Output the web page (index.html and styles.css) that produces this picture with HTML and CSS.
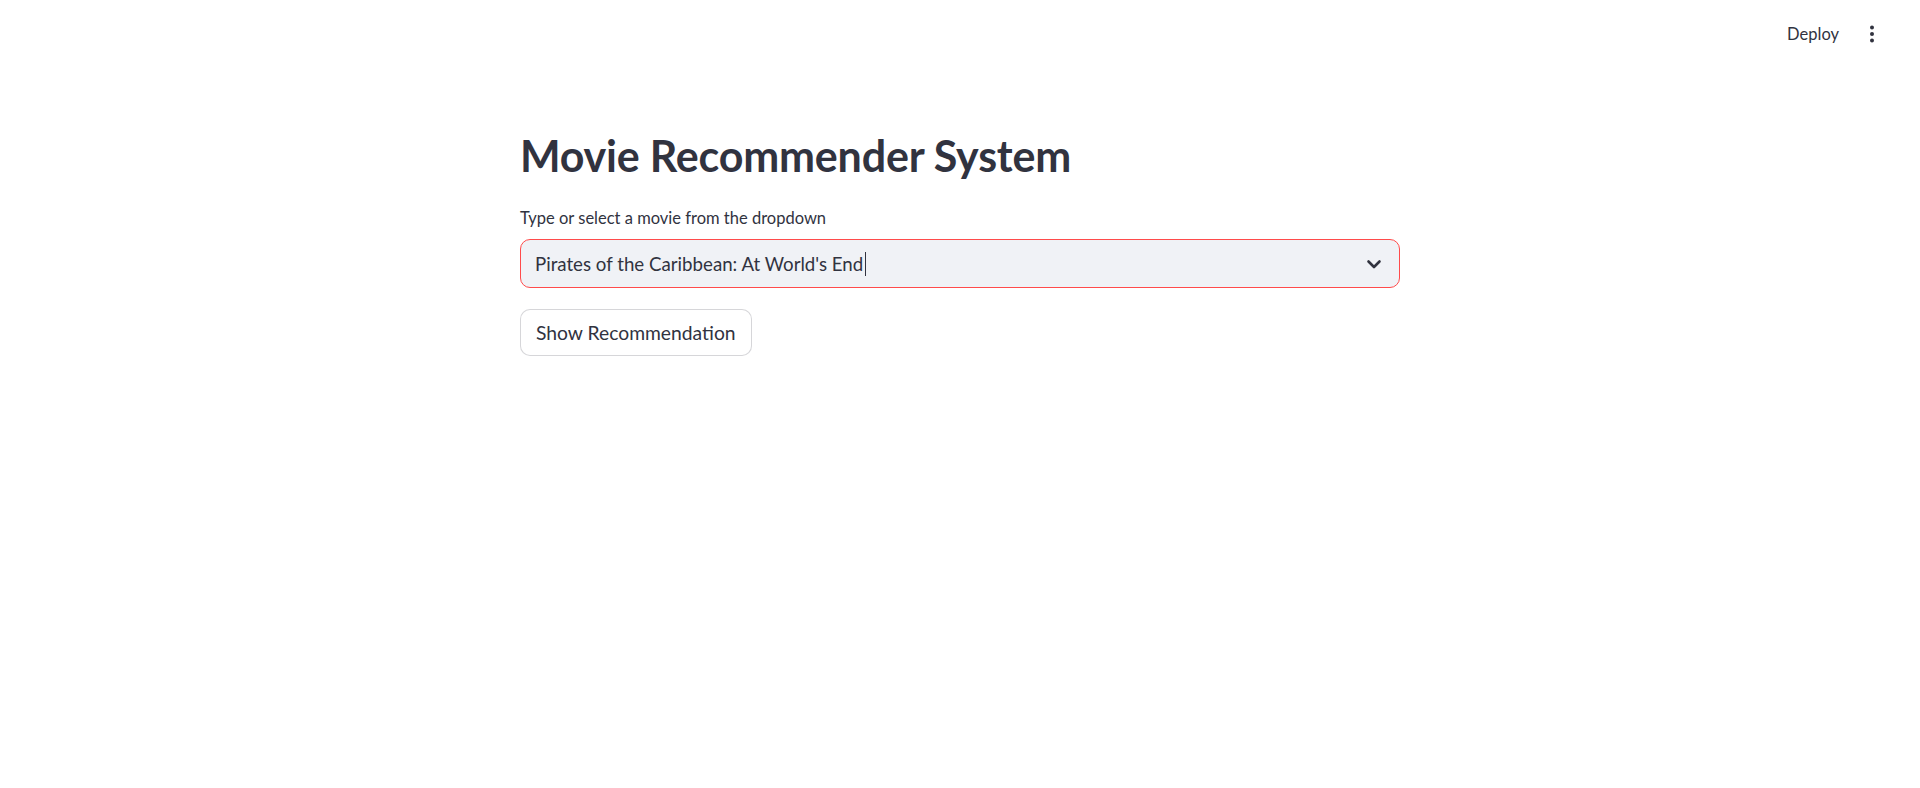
FILE: index.html
```html
<!DOCTYPE html>
<html>
<head>
<meta charset="utf-8">
<link rel="stylesheet" href="styles.css">
</head>
<body>
<header class="topbar">
  <button class="deploy">Deploy</button>
  <button class="menu" aria-label="menu">
    <svg width="20" height="20" viewBox="0 0 20 20"><circle cx="10" cy="3.5" r="2" fill="#31333f"/><circle cx="10" cy="10" r="2" fill="#31333f"/><circle cx="10" cy="16.5" r="2" fill="#31333f"/></svg>
  </button>
</header>
<main class="main">
  <h1 class="title">Movie Recommender System</h1>
  <label class="label">Type or select a movie from the dropdown</label>
  <div class="select">
    <span class="value">Pirates of the Caribbean: At World's End<span class="caret"></span></span>
    <svg class="chev" width="24" height="24" viewBox="0 0 24 24"><path d="M6.5 9.5 L12 15 L17.5 9.5" fill="none" stroke="#31333f" stroke-width="2.6" stroke-linecap="round" stroke-linejoin="round"/></svg>
  </div>
  <button class="btn">Show Recommendation</button>
</main>
</body>
</html>
```
FILE: styles.css
```css
* { box-sizing: border-box; }
html, body { margin: 0; padding: 0; background: #ffffff; }
body {
  font-family: Lato, "Noto Sans", sans-serif;
  color: #31333f;
  height: 788px;
  overflow: hidden;
}
.topbar {
  height: 68px;
  display: flex;
  justify-content: flex-end;
  align-items: center;
  padding-right: 34px;
  gap: 19px;
}
.deploy {
  font-family: inherit;
  font-size: 16.5px;
  color: #31333f;
  background: none;
  border: none;
  padding: 0;
}
.menu {
  background: none;
  border: none;
  padding: 0;
  width: 28px;
  height: 28px;
  display: flex;
  align-items: center;
  justify-content: center;
}
.main {
  width: 880px;
  margin: 0 auto;
  padding-top: 55px;
  display: flex;
  flex-direction: column;
  align-items: flex-start;
}
.title {
  margin: 0;
  font-size: 43px;
  font-weight: 700;
  line-height: 66px;
  letter-spacing: -0.2px;
}
.label {
  margin-top: 15px;
  font-size: 16.5px;
  line-height: 28px;
}
.select {
  margin-top: 7px;
  width: 880px;
  height: 49px;
  background: #f0f2f6;
  border: 1px solid #ff4b4b;
  border-radius: 10px;
  display: flex;
  align-items: center;
  justify-content: space-between;
  padding: 0 13px 0 14px;
}
.value {
  font-size: 18.7px;
  display: flex;
  align-items: center;
}
.caret {
  display: inline-block;
  width: 1px;
  height: 24px;
  background: #31333f;
  margin-left: 2px;
}
.btn {
  margin-top: 21px;
  height: 47px;
  padding: 0 15px;
  background: #ffffff;
  border: 1px solid rgba(49, 51, 63, 0.2);
  border-radius: 10px;
  font-family: inherit;
  font-size: 19.3px;
  color: #31333f;
}
```
